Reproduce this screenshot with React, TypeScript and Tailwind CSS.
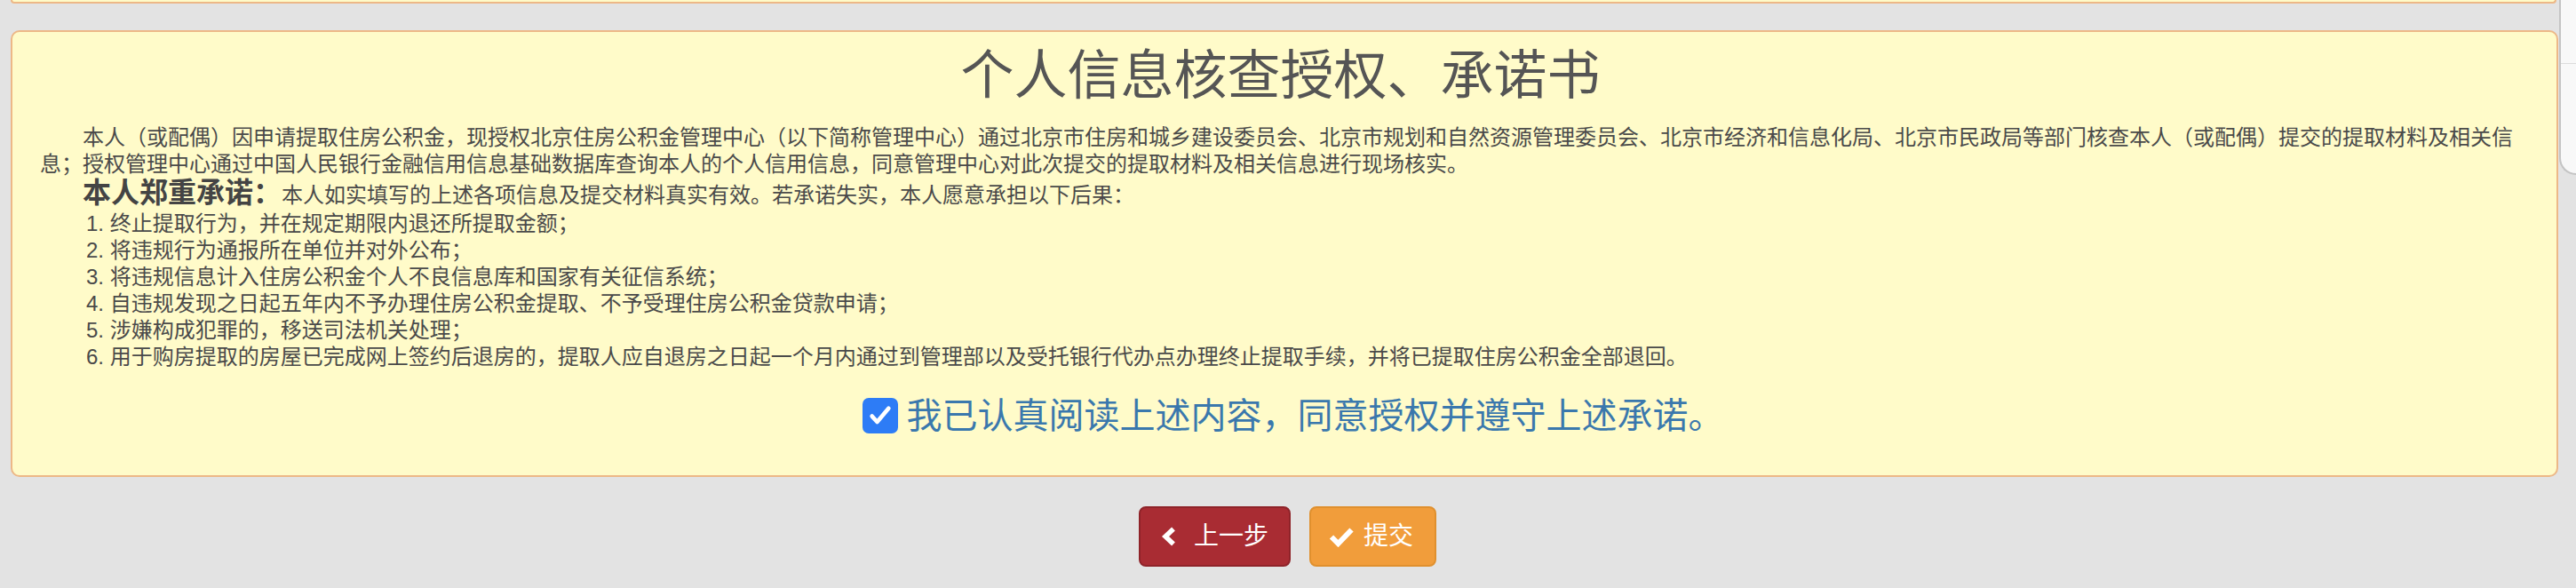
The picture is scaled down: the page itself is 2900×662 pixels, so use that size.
import React from "react";

const items = [
  "终止提取行为，并在规定期限内退还所提取金额；",
  "将违规行为通报所在单位并对外公布；",
  "将违规信息计入住房公积金个人不良信息库和国家有关征信系统；",
  "自违规发现之日起五年内不予办理住房公积金提取、不予受理住房公积金贷款申请；",
  "涉嫌构成犯罪的，移送司法机关处理；",
  "用于购房提取的房屋已完成网上签约后退房的，提取人应自退房之日起一个月内通过到管理部以及受托银行代办点办理终止提取手续，并将已提取住房公积金全部退回。",
];

export default function App() {
  return (
    <div className="relative min-h-screen bg-[#e3e3e3] pl-[12px] pr-[20px] font-['Liberation_Sans','Noto_Sans_CJK_SC',sans-serif] text-[#4a4a4a]">
      {/* Bottom edge of the previous card */}
      <div className="h-[4px] mr-[2px] rounded-b-[10px] border-x-2 border-b-2 border-[#edb887] bg-[#fffbc9]" />

      {/* Authorisation card */}
      <div className="mt-[30px] rounded-[10px] border-2 border-[#edb887] bg-[#fffbc9] pt-[17px] pb-[43px] pl-[31px] pr-[40px]">
        <h3 className="text-center text-[60px] leading-[66px] text-[#555]">个人信息核查授权、承诺书</h3>

        <p className="mt-[21px] indent-[48px] text-[24px] leading-[30px]">
          本人（或配偶）因申请提取住房公积金，现授权北京住房公积金管理中心（以下简称管理中心）通过北京市住房和城乡建设委员会、北京市规划和自然资源管理委员会、北京市经济和信息化局、北京市民政局等部门核查本人（或配偶）提交的提取材料及相关信息；授权管理中心通过中国人民银行金融信用信息基础数据库查询本人的个人信用信息，同意管理中心对此次提交的提取材料及相关信息进行现场核实。
        </p>

        <p className="indent-[48px] text-[24px] leading-[35px]">
          <span className="text-[32px] font-bold text-[#444]">本人郑重承诺：</span>
          本人如实填写的上述各项信息及提交材料真实有效。若承诺失实，本人愿意承担以下后果：
        </p>

        <div className="ml-[52px] text-[24px] leading-[30px]">
          {items.map((t, i) => (
            <div key={i}>
              {i + 1}. {t}
            </div>
          ))}
        </div>

        <label className="mt-[27px] flex items-center justify-center gap-[10px] pl-[28px]">
          <span className="flex h-[40px] w-[40px] items-center justify-center rounded-[7px] bg-[#2d7cf6]">
            <svg width="28" height="28" viewBox="0 0 24 24" fill="none">
              <path d="M4 12.5l5 5.5L20 5" stroke="#fff" strokeWidth="4" strokeLinecap="round" strokeLinejoin="round" />
            </svg>
          </span>
          <span className="text-[40px] leading-[48px] text-[#3a78ad]">我已认真阅读上述内容，同意授权并遵守上述承诺。</span>
        </label>
      </div>

      {/* Actions */}
      <div className="mt-[33px] flex justify-center gap-[21px] pl-[7px]">
        <button className="flex h-[68px] w-[171px] items-center gap-[20px] rounded-[8px] border-2 border-[#8f2329] bg-[#a92c33] pl-[23px] text-[28px] text-white">
          <svg width="17" height="22" viewBox="0 0 17 22" fill="none">
            <path d="M14 2.5L5 11l9 8.5" stroke="#fff" strokeWidth="5.5" strokeLinejoin="miter" />
          </svg>
          <span>上一步</span>
        </button>
        <button className="flex h-[68px] w-[143px] items-center gap-[11px] rounded-[8px] border-2 border-[#e0902e] bg-[#f19d3b] pl-[20px] text-[28px] text-white">
          <svg width="28" height="23" viewBox="0 0 28 23" fill="none">
            <path d="M3 11.5l7.5 7.5L25.5 3.5" stroke="#fff" strokeWidth="6" strokeLinejoin="miter" />
          </svg>
          <span>提交</span>
        </button>
      </div>

      {/* Side panel peeking in at the right edge */}
      <div className="absolute right-0 top-0 h-[197px] w-[19px] rounded-bl-[24px] border-b-2 border-l-2 border-[#c4c4c4] bg-[#f8f8f8]">
        <div className="mt-[71px] border-t border-[#dcdcdc]" />
      </div>
    </div>
  );
}
